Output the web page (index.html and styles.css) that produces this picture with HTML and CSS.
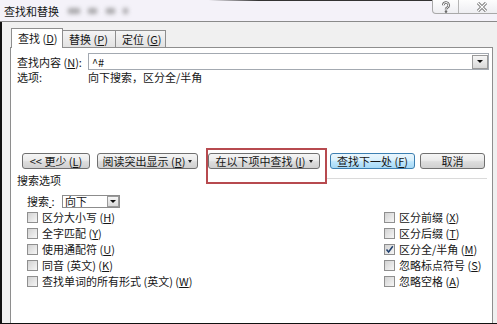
FILE: index.html
```html
<!DOCTYPE html>
<html lang="zh-CN">
<head>
  <meta charset="UTF-8" />
  <title>查找和替换</title>
  <link rel="stylesheet" href="styles.css">
</head>
<body>
  <header class="titlebar">
    <span class="title">查找和替换</span>
    <span class="smudges"><i></i><i></i><i></i><i></i></span>
    <span class="capBtns">
      <span class="capBtn help">
        <svg width="10" height="12" viewBox="0 0 10 12">
          <path d="M2.3 4.2 a2.7 2.7 0 1 1 3.9 2.4 c-.9.4-1.2.9-1.2 1.8" fill="none" stroke="#6a6a6a" stroke-width="2.6"/>
          <path d="M2.3 4.2 a2.7 2.7 0 1 1 3.9 2.4 c-.9.4-1.2.9-1.2 1.8" fill="none" stroke="#fff" stroke-width="1"/>
          <circle cx="5" cy="10.6" r="1.3" fill="#6a6a6a"/>
        </svg>
      </span>
      <span class="capBtn close">
        <svg width="12" height="10" viewBox="0 0 12 10">
          <path d="M2 1 L10 9 M10 1 L2 9" stroke="#6a6a6a" stroke-width="3"/>
          <path d="M2 1 L10 9 M10 1 L2 9" stroke="#fff" stroke-width="1.2"/>
        </svg>
      </span>
    </span>
  </header>

  <div class="dialog">
    <div class="tabs">
      <span class="tab active t1">查找 (<u>D</u>)</span>
      <span class="tab t2">替换 (<u>P</u>)</span>
      <span class="tab t3">定位 (<u>G</u>)</span>
    </div>

    <section class="panel">
      <div class="findRow">
        <span class="lbl">查找内容 (<u>N</u>):</span>
        <div class="combo wide">
          <span class="val">^#</span>
          <span class="drop"><b></b></span>
        </div>
      </div>
      <div class="optsRow">
        <span class="lbl">选项:</span>
        <span>向下搜索，区分全/半角</span>
      </div>

      <div class="buttons">
        <button class="btn bLess">&lt;&lt; 更少 (<u>L</u>)</button>
        <button class="btn bRead">阅读突出显示 (<u>R</u>) <b class="caret"></b></button>
        <span class="marked"><button class="btn bIn">在以下项中查找 (<u>I</u>) <b class="caret"></b></button></span>
        <button class="btn default bNext">查找下一处 (<u>F</u>)</button>
        <button class="btn bCancel">取消</button>
      </div>

      <div class="groupHead">
        <span>搜索选项</span>
        <span class="rule"></span>
      </div>

      <div class="searchRow">
        <span class="sLbl">搜索<u>&nbsp;</u>:</span>
        <div class="combo small">
          <span class="val">向下</span>
          <span class="drop"><b></b></span>
        </div>
      </div>

      <div class="checks">
        <div class="col">
          <div class="opt"><span class="cb"></span>区分大小写 (<u>H</u>)</div>
          <div class="opt"><span class="cb"></span>全字匹配 (<u>Y</u>)</div>
          <div class="opt"><span class="cb"></span>使用通配符 (<u>U</u>)</div>
          <div class="opt"><span class="cb"></span>同音 (英文) (<u>K</u>)</div>
          <div class="opt"><span class="cb"></span>查找单词的所有形式 (英文) (<u>W</u>)</div>
        </div>
        <div class="col">
          <div class="opt"><span class="cb"></span>区分前缀 (<u>X</u>)</div>
          <div class="opt"><span class="cb"></span>区分后缀 (<u>T</u>)</div>
          <div class="opt">
            <span class="cb checked">
              <svg width="9" height="9" viewBox="0 0 9 9"><path d="M1.5 4.5 L3.6 7 L7.8 1.2" fill="none" stroke="#1f3f6e" stroke-width="1.5"/></svg>
            </span>区分全/半角 (<u>M</u>)
          </div>
          <div class="opt"><span class="cb"></span>忽略标点符号 (<u>S</u>)</div>
          <div class="opt"><span class="cb"></span>忽略空格 (<u>A</u>)</div>
        </div>
      </div>
    </section>
  </div>
</body>
</html>
```

FILE: styles.css
```css
/* Word find & replace dialog, win7 look */
body {
  margin: 0;
  width: 497px; height: 324px;
  overflow: hidden;
  background: #f0f0f0;
  color: #161616;
  font: 11px/14px "Noto Sans CJK SC", "Liberation Sans", sans-serif;
}
u { text-decoration: underline; text-underline-offset: 1px; }

/* title bar */
.titlebar {
  height: 21px;
  border-bottom: 1px solid #8a8a8a;
  background: linear-gradient(to right, #f4f2f9 42%, #333 52%) top / 100% 1px no-repeat, #f4f2f9;
  display: flex; align-items: center;
  overflow: hidden;
}
.title { margin-left: 4px; }
.smudges { display: flex; margin-left: 9px; }
.smudges i {
  display: block;
  height: 6px;
  background: #7a7a7a;
  opacity: .6;
  filter: blur(2px);
}
.smudges i:nth-child(1) { width: 12px; }
.smudges i:nth-child(2) { width: 9px; margin-left: 8px; }
.smudges i:nth-child(3) { width: 9px; margin-left: 9px; }
.smudges i:nth-child(4) { width: 5px; margin-left: 8px; }
.capBtns {
  margin-left: auto; margin-right: -8px;
  align-self: flex-start;
  display: flex;
  height: 13px;
  border: 1px solid #a9a9a9; border-top: 0;
  border-radius: 0 0 0 4px;
  background: linear-gradient(#fdfdfd, #eeeef2);
}
.capBtn { display: flex; align-items: center; justify-content: center; }
.capBtn.help { width: 25px; border-right: 1px solid #b5b5b5; }
.capBtn.close { width: 45px; }

/* dialog body */
.dialog {
  height: 302px;
  box-sizing: border-box;
  border-left: 2px solid #111;
  border-bottom: 1px solid #111;
  padding: 6px 4px 0 8px;
  display: flex; flex-direction: column;
  overflow: hidden;
}
.tabs {
  display: flex; align-items: flex-end;
  height: 20px;
  padding-left: 1px;
  margin-bottom: -1px;
  position: relative; z-index: 1;
}
.tab {
  box-sizing: border-box;
  height: 17px;
  margin-bottom: 1px;
  padding-left: 6px;
  border: 1px solid #8e8e8e; border-bottom: 0;
  background: linear-gradient(#f4f4f4, #e2e2e2);
  line-height: 16px;
  white-space: nowrap;
}
.tab + .tab { border-left: 0; }
.tab.active {
  height: 20px; margin-bottom: 0;
  background: #fff;
  line-height: 19px;
}
.t1 { width: 52px; }
.t2 { width: 53px; }
.t3 { width: 50px; }

.panel {
  flex-grow: 1;
  border: 1px solid #8e8e8e; border-bottom: 0;
  background: #fff;
}
.lbl { width: 71px; flex-shrink: 0; white-space: nowrap; }

.findRow {
  margin-top: 5px;
  height: 17px;
  padding-left: 6px;
  display: flex; align-items: center;
}
.combo {
  box-sizing: border-box;
  display: flex; align-items: center;
  border: 1px solid #a3a9b1;
  background: #fff;
}
.combo .val { padding-left: 3px; line-height: 12px; }
.combo .drop {
  margin-left: auto;
  box-sizing: border-box;
  display: flex; align-items: center; justify-content: center;
  border: 1px solid #9a9a9a;
  background: linear-gradient(#f6f6f6, #d9d9d9);
}
.drop b {
  width: 0; height: 0;
  border-left: 3px solid transparent;
  border-right: 3px solid transparent;
  border-top: 3px solid #111;
}
.combo.wide { flex-grow: 1; height: 17px; margin-right: 3px; }
.combo.wide .drop { width: 16px; height: 14px; }

.optsRow {
  height: 14px;
  padding-left: 6px;
  display: flex;
}

/* buttons */
.buttons {
  margin-top: 69px;
  height: 16px;
  padding-left: 11px;
  display: flex;
}
.btn {
  box-sizing: border-box;
  height: 16px;
  padding: 0;
  border: 1px solid #707070;
  border-radius: 3px;
  background: linear-gradient(#f5f5f5 0, #ebebeb 45%, #dddddd 55%, #d0d0d0 100%);
  font: inherit; line-height: 13px;
  color: #161616;
  white-space: nowrap;
  display: flex; align-items: center; justify-content: center;
}
.btn.default {
  border-color: #3c7fb1;
  background: linear-gradient(#eaf6fd 0, #d9f0fc 45%, #bee6fd 55%, #a7d9f5 100%);
}
.caret {
  display: inline-block;
  margin-left: 3px;
  width: 0; height: 0;
  border-left: 2.5px solid transparent;
  border-right: 2.5px solid transparent;
  border-top: 3px solid #222;
}
.bLess { width: 68px; }
.bRead { width: 101px; margin-left: 7px; }
.marked { position: relative; margin-left: 10px; }
.marked::after {
  content: "";
  position: absolute;
  left: -2px; top: -5px;
  width: 121px; height: 36px;
  box-sizing: border-box;
  border: 2px solid #b74a4f;
}
.bIn { width: 112px; }
.bNext { width: 85px; margin-left: 10px; }
.bCancel { width: 65px; margin-left: 5px; }

/* search options */
.groupHead {
  margin-top: 4px;
  height: 14px;
  padding-left: 6px;
  display: flex;
}
.groupHead .rule {
  margin: 5px 5px 0 auto;
  width: 160px; height: 1px;
  background: #dadada;
}
.searchRow {
  margin-top: 8px;
  height: 12px;
  line-height: 12px;
  padding-left: 16px;
  display: flex; align-items: center;
}
.sLbl { width: 35px; }
.combo.small {
  width: 58px; height: 13px;
  margin-top: 1px;
  border-color: #8c8c8c;
}
.combo.small .val { padding-left: 2px; line-height: 11px; }
.combo.small .drop { width: 12px; height: 11px; }

.checks {
  margin-top: 2px;
  display: grid;
  grid-template-columns: 357px 1fr;
  padding-left: 16px;
}
.opt {
  height: 16px;
  display: flex; align-items: center;
  white-space: nowrap;
}
.cb {
  box-sizing: border-box;
  width: 11px; height: 11px;
  margin-right: 4px;
  border: 1px solid #8f8f8f;
  background: linear-gradient(135deg, #d2d2d2, #f6f6f6);
  display: flex; align-items: center; justify-content: center;
}
```
